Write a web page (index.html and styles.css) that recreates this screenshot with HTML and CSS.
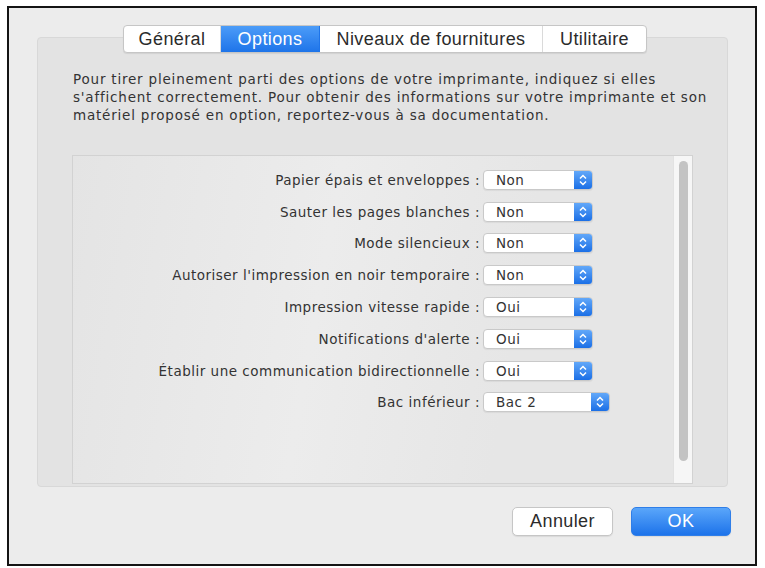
FILE: index.html
```html
<!DOCTYPE html>
<html lang="fr">
<head>
<meta charset="utf-8">
<title>Options</title>
<link rel="stylesheet" href="styles.css">
</head>
<body>
<div class="frame">
  <div class="window">
    <div class="group">
      <div class="tabs">
        <div class="tab">Général</div>
        <div class="tab active">Options</div>
        <div class="tab">Niveaux de fournitures</div>
        <div class="tab last">Utilitaire</div>
      </div>
      <p class="intro">Pour tirer pleinement parti des options de votre imprimante, indiquez si elles s'affichent correctement. Pour obtenir des informations sur votre imprimante et son matériel proposé en option, reportez-vous à sa documentation.</p>
      <div class="list">
        <div class="rows">
          <div class="row"><span class="label">Papier épais et enveloppes :</span><span class="popup"><span class="val">Non</span><span class="arrows"><svg width="18" height="20" viewBox="0 0 18 20"><path d="M6 8.5 L9 5.5 L12 8.5 M6 11.5 L9 14.5 L12 11.5" fill="none" stroke="#fff" stroke-width="1.5"/></svg></span></span></div>
          <div class="row"><span class="label">Sauter les pages blanches :</span><span class="popup"><span class="val">Non</span><span class="arrows"><svg width="18" height="20" viewBox="0 0 18 20"><path d="M6 8.5 L9 5.5 L12 8.5 M6 11.5 L9 14.5 L12 11.5" fill="none" stroke="#fff" stroke-width="1.5"/></svg></span></span></div>
          <div class="row"><span class="label">Mode silencieux :</span><span class="popup"><span class="val">Non</span><span class="arrows"><svg width="18" height="20" viewBox="0 0 18 20"><path d="M6 8.5 L9 5.5 L12 8.5 M6 11.5 L9 14.5 L12 11.5" fill="none" stroke="#fff" stroke-width="1.5"/></svg></span></span></div>
          <div class="row"><span class="label">Autoriser l'impression en noir temporaire :</span><span class="popup"><span class="val">Non</span><span class="arrows"><svg width="18" height="20" viewBox="0 0 18 20"><path d="M6 8.5 L9 5.5 L12 8.5 M6 11.5 L9 14.5 L12 11.5" fill="none" stroke="#fff" stroke-width="1.5"/></svg></span></span></div>
          <div class="row"><span class="label">Impression vitesse rapide :</span><span class="popup"><span class="val">Oui</span><span class="arrows"><svg width="18" height="20" viewBox="0 0 18 20"><path d="M6 8.5 L9 5.5 L12 8.5 M6 11.5 L9 14.5 L12 11.5" fill="none" stroke="#fff" stroke-width="1.5"/></svg></span></span></div>
          <div class="row"><span class="label">Notifications d'alerte :</span><span class="popup"><span class="val">Oui</span><span class="arrows"><svg width="18" height="20" viewBox="0 0 18 20"><path d="M6 8.5 L9 5.5 L12 8.5 M6 11.5 L9 14.5 L12 11.5" fill="none" stroke="#fff" stroke-width="1.5"/></svg></span></span></div>
          <div class="row"><span class="label">Établir une communication bidirectionnelle :</span><span class="popup"><span class="val">Oui</span><span class="arrows"><svg width="18" height="20" viewBox="0 0 18 20"><path d="M6 8.5 L9 5.5 L12 8.5 M6 11.5 L9 14.5 L12 11.5" fill="none" stroke="#fff" stroke-width="1.5"/></svg></span></span></div>
          <div class="row"><span class="label">Bac inférieur :</span><span class="popup wide"><span class="val">Bac 2</span><span class="arrows"><svg width="18" height="20" viewBox="0 0 18 20"><path d="M6 8.5 L9 5.5 L12 8.5 M6 11.5 L9 14.5 L12 11.5" fill="none" stroke="#fff" stroke-width="1.5"/></svg></span></span></div>
        </div>
        <div class="scrolltrack"><div class="thumb"></div></div>
      </div>
    </div>
    <div class="buttons">
      <div class="btn">Annuler</div>
      <div class="btn primary">OK</div>
    </div>
  </div>
</div>
</body>
</html>
```

FILE: styles.css
```css
html, body {
  margin: 0;
  padding: 0;
  background: #ffffff;
}
body {
  font-family: "DejaVu Sans", Verdana, sans-serif;
  color: #333333;
}
.frame {
  margin: 6px 0 0 7px;
  width: 746px;
  height: 556px;
  border: 2px solid #141414;
}
.window {
  background: #ececec;
  height: 100%;
  box-sizing: border-box;
  padding: 29px 0 0 28px;
}
.group {
  width: 689px;
  height: 448px;
  border: 1px solid #d8d8d8;
  border-radius: 4px;
  background: #e3e3e3;
  box-sizing: content-box;
  display: flex;
  flex-direction: column;
}
.tabs {
  align-self: center;
  margin-top: -13px;
  margin-left: 5px;
  display: flex;
  height: 26px;
  background: #ffffff;
  border: 1px solid #c6c6c6;
  border-radius: 4px;
  box-shadow: 0 1px 1px rgba(0,0,0,0.08);
  overflow: hidden;
}
.tab {
  font-family: "Liberation Sans", Arial, sans-serif;
  font-size: 18px;
  letter-spacing: 0.4px;
  line-height: 26px;
  text-align: center;
  border-right: 1px solid #dadada;
  color: #2b2b2b;
}
.tab:nth-child(1) { width: 96px; }
.tab:nth-child(2) { width: 98px; }
.tab:nth-child(3) { width: 222px; }
.tab.last { border-right: none; width: 103px; }
.tab.active {
  background: linear-gradient(#4c9cf8, #1e74e9);
  color: #ffffff;
  border-right-color: #1e74e9;
}
.intro {
  width: 660px;
  margin: 17px 0 0 35px;
  font-size: 13.5px;
  letter-spacing: 0.8px;
  line-height: 18px;
}
.list {
  margin: 31px 34px 0 34px;
  height: 327px;
  border: 1px solid #d2d2d2;
  background: linear-gradient(100deg, #e4e4e4 0%, #ececec 40%, #e6e6e6 70%);
  display: flex;
}
.rows {
  flex: 1;
  padding-top: 8px;
}
.row {
  height: 31.8px;
  display: flex;
  align-items: center;
}
.label {
  width: 407px;
  text-align: right;
  font-size: 13.5px;
  letter-spacing: 0.5px;
  margin-right: 3px;
  color: #333;
}
.popup {
  width: 108px;
  height: 18px;
  border: 1px solid #c9c9c9;
  border-radius: 4px;
  background: #ffffff;
  display: flex;
  overflow: hidden;
  box-shadow: 0 1px 1px rgba(0,0,0,0.06);
}
.popup.wide { width: 125px; }
.val {
  flex: 1;
  font-size: 13.5px;
  letter-spacing: 0.5px;
  line-height: 18px;
  padding-left: 12px;
  color: #333;
}
.arrows {
  width: 18px;
  height: 18px;
  background: linear-gradient(#62a8f9, #1b6fe6);
  display: flex;
  align-items: center;
  justify-content: center;
}
.arrows svg { display: block; }
.scrolltrack {
  width: 19px;
  background: #f6f6f6;
  border-left: 1px solid #e2e2e2;
  padding: 5px 0 0 5px;
  box-sizing: border-box;
}
.thumb {
  width: 9px;
  height: 300px;
  border-radius: 5px;
  background: #c3c3c3;
}
.buttons {
  display: flex;
  justify-content: flex-end;
  gap: 18px;
  margin: 20px 24px 0 0;
}
.btn {
  width: 99px;
  height: 27px;
  border: 1px solid #c6c6c6;
  border-radius: 5px;
  background: #ffffff;
  font-family: "Liberation Sans", Arial, sans-serif;
  font-size: 18px;
  letter-spacing: 0.4px;
  line-height: 27px;
  text-align: center;
  color: #2b2b2b;
  box-shadow: 0 1px 1px rgba(0,0,0,0.08);
}
.btn.primary {
  background: linear-gradient(#5aa6fa, #1d73ea);
  border-color: #2f7ee8;
  color: #ffffff;
  width: 98px;
}
```
